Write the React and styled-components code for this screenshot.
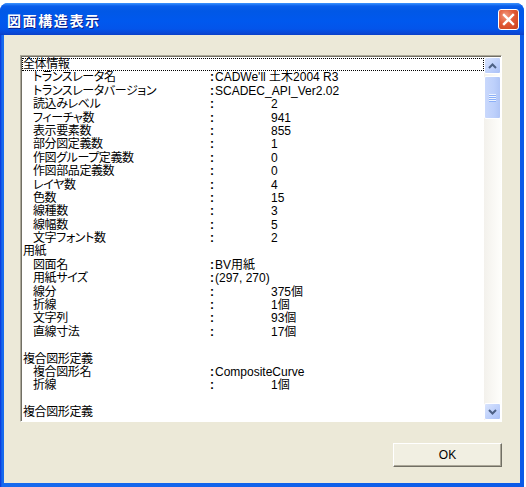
import { createGlobalStyle, styled } from "styled-components";

const GlobalStyle = createGlobalStyle`
  body {
    margin: 0;
    background: #ffffff;
  }
`;

const rows = [
  { label: "全体情報", top: true, focus: true },
  { label: "トランスレータ名", value: "CADWe'll 土木2004 R3" },
  { label: "トランスレータバージョン", value: "SCADEC_API_Ver2.02" },
  { label: "読込みレベル", value: "2", num: true },
  { label: "フィーチャ数", value: "941", num: true },
  { label: "表示要素数", value: "855", num: true },
  { label: "部分図定義数", value: "1", num: true },
  { label: "作図グループ定義数", value: "0", num: true },
  { label: "作図部品定義数", value: "0", num: true },
  { label: "レイヤ数", value: "4", num: true },
  { label: "色数", value: "15", num: true },
  { label: "線種数", value: "3", num: true },
  { label: "線幅数", value: "5", num: true },
  { label: "文字フォント数", value: "2", num: true },
  { label: "用紙", top: true },
  { label: "図面名", value: "BV用紙" },
  { label: "用紙サイズ", value: "(297, 270)" },
  { label: "線分", value: "375個", num: true },
  { label: "折線", value: "1個", num: true },
  { label: "文字列", value: "93個", num: true },
  { label: "直線寸法", value: "17個", num: true },
  { blank: true },
  { label: "複合図形定義", top: true },
  { label: "複合図形名", value: "CompositeCurve" },
  { label: "折線", value: "1個", num: true },
  { blank: true },
  { label: "複合図形定義", top: true },
];

export default function App() {
  return (
    <>
      <GlobalStyle />
      <Window>
        <TitleBar>
          <Title>図面構造表示</Title>
          <CloseButton aria-label="close">
            <svg width="13" height="13" viewBox="0 0 13 13">
              <path d="M2 2 L11 11 M11 2 L2 11" stroke="#fff" strokeWidth="2.4" strokeLinecap="square" />
            </svg>
          </CloseButton>
        </TitleBar>
        <Client>
          <ListBox>
            <ListContent>
              {rows.map((r, i) =>
                r.blank ? (
                  <Row key={i} />
                ) : (
                  <Row key={i} $focus={r.focus}>
                    <Label $top={r.top}>{r.label}</Label>
                    {r.value !== undefined && (
                      <Value>
                        <Colon>:</Colon>
                        <ValueText $num={r.num}>{r.value}</ValueText>
                      </Value>
                    )}
                  </Row>
                )
              )}
            </ListContent>
            <ScrollBar>
              <ScrollButton>
                <svg width="9" height="6" viewBox="0 0 9 6">
                  <path d="M1 5 L4.5 1.5 L8 5" stroke="#4d6185" strokeWidth="2" fill="none" />
                </svg>
              </ScrollButton>
              <Thumb>
                <Grip />
                <Grip />
                <Grip />
                <Grip />
              </Thumb>
              <Track />
              <ScrollButton>
                <svg width="9" height="6" viewBox="0 0 9 6">
                  <path d="M1 1 L4.5 4.5 L8 1" stroke="#4d6185" strokeWidth="2" fill="none" />
                </svg>
              </ScrollButton>
            </ScrollBar>
          </ListBox>
          <Footer>
            <OkButton>OK</OkButton>
          </Footer>
        </Client>
      </Window>
    </>
  );
}

const Window = styled.div`
  margin-top: 3px;
  width: 524px;
  height: 484px;
  border-radius: 8px 8px 0 0;
  background: linear-gradient(90deg, #0831d9 0px, #166aee 2px, #0a5ae8 100%);
  display: flex;
  flex-direction: column;
  overflow: hidden;
`;

const TitleBar = styled.div`
  height: 32px;
  flex-shrink: 0;
  display: flex;
  align-items: center;
  justify-content: space-between;
  padding: 0 5px 0 7px;
  background: linear-gradient(
    180deg,
    #3d95ff 0px,
    #0a5eeb 3px,
    #0158e6 8px,
    #0058ee 18px,
    #0354ea 26px,
    #0a48d6 30px,
    #0a3fc8 32px
  );
`;

const Title = styled.div`
  color: #ffffff;
  font-family: "Noto Sans CJK JP", sans-serif;
  font-weight: 700;
  font-size: 14px;
  letter-spacing: 1.6px;
  text-shadow: 1px 1px 0 #0a1e8c;
  margin-top: 1px;
`;

const CloseButton = styled.div`
  width: 21px;
  height: 21px;
  box-sizing: border-box;
  border: 1px solid #ffffff;
  border-radius: 3px;
  background: radial-gradient(circle at 35% 30%, #f29a7f 0%, #e25a37 45%, #c8401d 100%);
  display: flex;
  align-items: center;
  justify-content: center;
  margin-top: 1px;
`;

const Client = styled.div`
  flex: 1;
  margin: 0 4px 4px 4px;
  background: #ece9d8;
  padding: 20px 18px 16px 16px;
  display: flex;
  flex-direction: column;
`;

const ListBox = styled.div`
  height: 367px;
  box-sizing: border-box;
  display: flex;
  background: #ffffff;
  border-top: 1px solid #aca899;
  border-left: 1px solid #aca899;
  border-right: 1px solid #ffffff;
  border-bottom: 1px solid #ffffff;
  box-shadow: inset 1px 1px 0 #716f64;
  padding: 1px 0 1px 1px;
`;

const ListContent = styled.div`
  flex: 1;
  padding-top: 1px;
  overflow: hidden;
`;

const Row = styled.div`
  display: grid;
  grid-template-columns: 188px 1fr;
  height: 13.4px;
  line-height: 13.4px;
  font-family: "Liberation Sans", "Noto Sans CJK JP", sans-serif;
  font-feature-settings: "palt";
  font-size: 12px;
  color: #000000;
  white-space: nowrap;
  outline: ${(p) => (p.$focus ? "1px dotted #000" : "none")};
  outline-offset: -1px;
`;

const Label = styled.div`
  padding-left: ${(p) => (p.$top ? "1px" : "11px")};
  letter-spacing: -0.4px;
`;

const Value = styled.div`
  display: flex;
`;

const Colon = styled.span`
  width: 5px;
  font-weight: 700;
`;

const ValueText = styled.span`
  padding-left: ${(p) => (p.$num ? "56px" : "0")};
`;

const ScrollBar = styled.div`
  width: 17px;
  display: flex;
  flex-direction: column;
  background: linear-gradient(90deg, #f3f1ec 0%, #fefefb 100%);
`;

const ScrollButton = styled.div`
  width: 17px;
  height: 17px;
  box-sizing: border-box;
  border: 1px solid #ffffff;
  border-radius: 2px;
  background: linear-gradient(135deg, #d9e4fd 0%, #bccffb 60%, #aac0f5 100%);
  display: flex;
  align-items: center;
  justify-content: center;
  flex-shrink: 0;
`;

const Thumb = styled.div`
  height: 43px;
  margin-top: 2px;
  box-sizing: border-box;
  border: 1px solid #ffffff;
  border-radius: 2px;
  background: linear-gradient(90deg, #c9d8fc 0%, #bdd0fb 60%, #b0c5f6 100%);
  display: flex;
  flex-direction: column;
  align-items: center;
  justify-content: center;
  gap: 1px;
`;

const Grip = styled.div`
  width: 7px;
  height: 1px;
  background: #eef4fe;
  box-shadow: 0 1px 0 #8cb0f8;
`;

const Track = styled.div`
  flex: 1;
`;

const Footer = styled.div`
  display: flex;
  justify-content: flex-end;
  margin-top: 21px;
`;

const OkButton = styled.div`
  width: 109px;
  height: 24px;
  box-sizing: border-box;
  background: #f1efe2;
  border-top: 1px solid #ffffff;
  border-left: 1px solid #ffffff;
  border-right: 1px solid #716f64;
  border-bottom: 1px solid #716f64;
  box-shadow: inset -1px -1px 0 #aca899;
  display: flex;
  align-items: center;
  justify-content: center;
  font-family: "Liberation Sans", "Noto Sans CJK JP", sans-serif;
  font-size: 12px;
  color: #000000;
`;
